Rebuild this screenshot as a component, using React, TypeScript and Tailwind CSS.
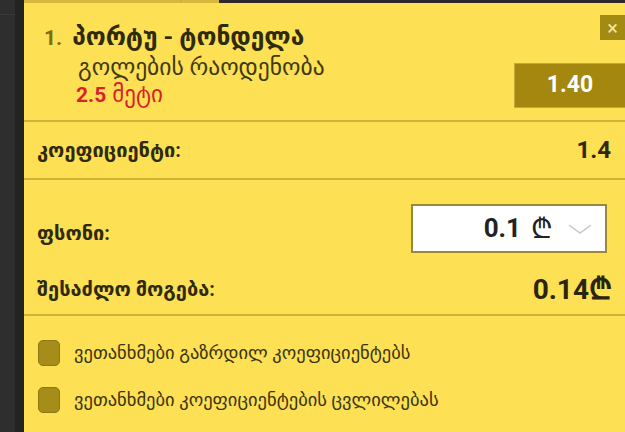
import React from 'react';

const geo = { fontFamily: 'Roboto, "DejaVu Sans", sans-serif' };
const lari = { fontFamily: '"DejaVu Sans", sans-serif' };

function Check({ label }: { label: string }) {
  return (
    <label className="flex items-center gap-[14px]">
      <span className="w-[22px] h-[26px] rounded-[5px] bg-[#a68d19] border border-[#8f7812] shrink-0" />
      <span className="text-[18.5px] text-[#3b3410] leading-none">{label}</span>
    </label>
  );
}

export default function App() {
  return (
    <div className="w-[625px] h-[432px] flex bg-[#2a2a2a] overflow-hidden" style={geo}>
      {/* sidebar */}
      <div className="flex shrink-0">
        <div className="w-[15px] bg-[#2e2e2e] flex flex-col">
          <div className="h-[15px] border-b border-[#3a3a3a]" />
        </div>
        <div className="w-[9px] bg-[#232323]" />
      </div>

      <div className="flex-1 flex flex-col bg-[#fde054]">
        {/* top tabs strip */}
        <div className="h-[3px] flex shrink-0">
          <div className="w-[157px] bg-[#d9b63c] border-r border-[#c9a833]" />
          <div className="w-[38px] bg-[#d9b63c]" />
          <div className="flex-1 bg-[#2a2a2a]" />
        </div>

        {/* selection */}
        <div className="h-[119px] flex border-b-2 border-[#d3b23c] shrink-0">
          <div className="flex-1 pl-[20px] pt-[19px]">
            <div className="flex items-baseline gap-[10px] leading-[30px]">
              <span className="text-[21px] font-bold text-[#7d6c12]">1.</span>
              <span className="text-[24.5px] font-bold text-[#2f2a0c]">პორტუ - ტონდელა</span>
            </div>
            <div className="pl-[34px] text-[23.5px] text-[#3f3912] leading-[28px]">გოლების რაოდენობა</div>
            <div className="pl-[32px] text-[#d91f2b] leading-[28px] flex items-baseline gap-[6px]">
              <span className="font-bold text-[21px]">2.5</span>
              <span className="text-[23px]">მეტი</span>
            </div>
          </div>
          <div className="flex flex-col items-end pt-[12px]">
            <div className="w-[25px] h-[25px] bg-[#a38a12] flex items-center justify-center text-[#f4e6a6] text-[20px] leading-none">×</div>
            <div className="mt-[23px] w-[111px] h-[45px] bg-[#a3870e] border-l border-t border-b border-[#c6a834] flex items-center justify-center text-white text-[23px] font-bold">1.40</div>
          </div>
        </div>

        {/* coefficient */}
        <div className="h-[58px] flex items-center justify-between pl-[13px] pr-[14px] border-b-2 border-[#d3b23c] shrink-0">
          <span className="text-[20px] text-[#2f2a0c] font-bold">კოეფიციენტი:</span>
          <span className="text-[24px] font-bold text-[#2f2a0c]">1.4</span>
        </div>

        {/* stake */}
        <div className="h-[136px] flex flex-col pl-[13px] pr-[18px] border-b-2 border-[#d3b23c] shrink-0">
          <div className="flex items-center justify-between mt-[24px]">
            <span className="text-[20px] text-[#2f2a0c] font-bold mt-[8px]">ფსონი:</span>
            <div className="w-[196px] h-[49px] bg-white border-2 border-[#9a893a] flex items-center justify-end pr-[12px]">
              <span className="text-[26px] font-bold text-[#222]">0.1</span>
              <span className="ml-[10px] text-[28px] text-[#222] font-light" style={lari}>₾</span>
              <svg width="26" height="14" viewBox="0 0 26 14" className="ml-[14px]">
                <path d="M2 3 L13 11 L24 3" fill="none" stroke="#c8c8c8" strokeWidth="1.5" />
              </svg>
            </div>
          </div>
          <div className="flex items-center justify-between mt-[13px]">
            <span className="text-[20px] text-[#2f2a0c] font-bold">შესაძლო მოგება:</span>
            <span className="text-[28px] font-bold text-[#2a2510] mr-[-5px]">0.14<span className="text-[30px]" style={lari}>₾</span></span>
          </div>
        </div>

        {/* agreements */}
        <div className="flex flex-col gap-[21px] pl-[14px] pt-[24px]">
          <Check label="ვეთანხმები გაზრდილ კოეფიციენტებს" />
          <Check label="ვეთანხმები კოეფიციენტების ცვლილებას" />
        </div>
      </div>
    </div>
  );
}
